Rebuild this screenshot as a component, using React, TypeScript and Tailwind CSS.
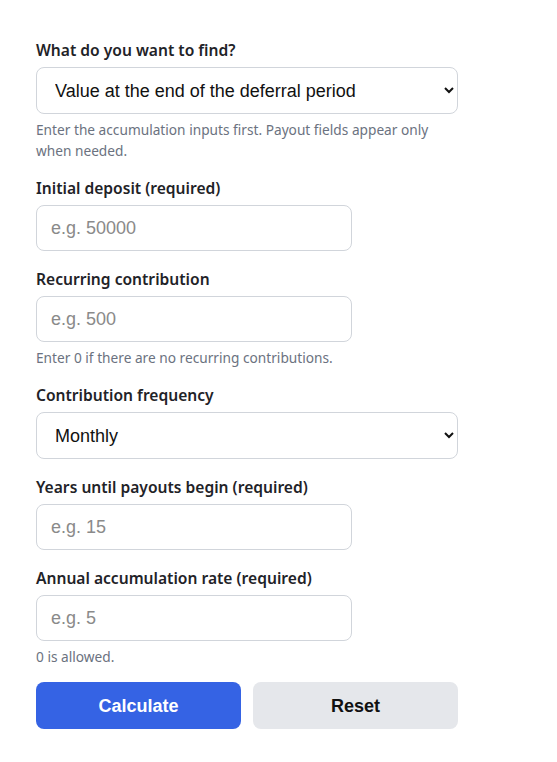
import { useState } from "react";

const labelCls = "block text-[15.6px] font-semibold text-[#1f2328] leading-6 mb-[5px]";
const hintCls = "mt-[5px] text-[13.7px] leading-[21px] text-[#6b7280]";
const boxCls =
  "rounded-lg border border-[#d1d5db] bg-white px-3.5 text-lg text-[#111] placeholder:text-[#8a8a8a] outline-none font-['Liberation_Sans',Arial,sans-serif]";
const inputCls = `${boxCls} h-[46px] w-[316px]`;
const selectCls = `${boxCls} h-[47px] w-full`;

export default function App() {
  const [target, setTarget] = useState("fv");
  const [freq, setFreq] = useState("monthly");

  return (
    <div className="min-h-screen bg-white" style={{ fontFamily: '"Noto Sans", sans-serif' }}>
      <form className="w-[422px] ml-9 pt-[38px] pb-8 flex flex-col" onSubmit={(e) => e.preventDefault()}>
        <label className={labelCls}>What do you want to find?</label>
        <select value={target} onChange={(e) => setTarget(e.target.value)} className={selectCls}>
          <option value="fv">Value at the end of the deferral period</option>
          <option value="payout">Payout amount</option>
        </select>
        <p className={hintCls}>Enter the accumulation inputs first. Payout fields appear only when needed.</p>

        <label className={`${labelCls} mt-[15px]`}>Initial deposit (required)</label>
        <input placeholder="e.g. 50000" className={inputCls} />

        <label className={`${labelCls} mt-4`}>Recurring contribution</label>
        <input placeholder="e.g. 500" className={inputCls} />
        <p className={hintCls}>Enter 0 if there are no recurring contributions.</p>

        <label className={`${labelCls} mt-[15px]`}>Contribution frequency</label>
        <select value={freq} onChange={(e) => setFreq(e.target.value)} className={selectCls}>
          <option value="monthly">Monthly</option>
          <option value="quarterly">Quarterly</option>
          <option value="annually">Annually</option>
        </select>

        <label className={`${labelCls} mt-4`}>Years until payouts begin (required)</label>
        <input placeholder="e.g. 15" className={inputCls} />

        <label className={`${labelCls} mt-4`}>Annual accumulation rate (required)</label>
        <input placeholder="e.g. 5" className={inputCls} />
        <p className={hintCls}>0 is allowed.</p>

        <div className="mt-[15px] grid grid-cols-2 gap-3 font-['Liberation_Sans',Arial,sans-serif]">
          <button type="submit" className="h-[47px] rounded-lg bg-[#3563e4] text-lg font-bold text-white">
            Calculate
          </button>
          <button type="reset" className="h-[47px] rounded-lg bg-[#e5e7eb] text-lg font-bold text-[#111]">
            Reset
          </button>
        </div>
      </form>
    </div>
  );
}
